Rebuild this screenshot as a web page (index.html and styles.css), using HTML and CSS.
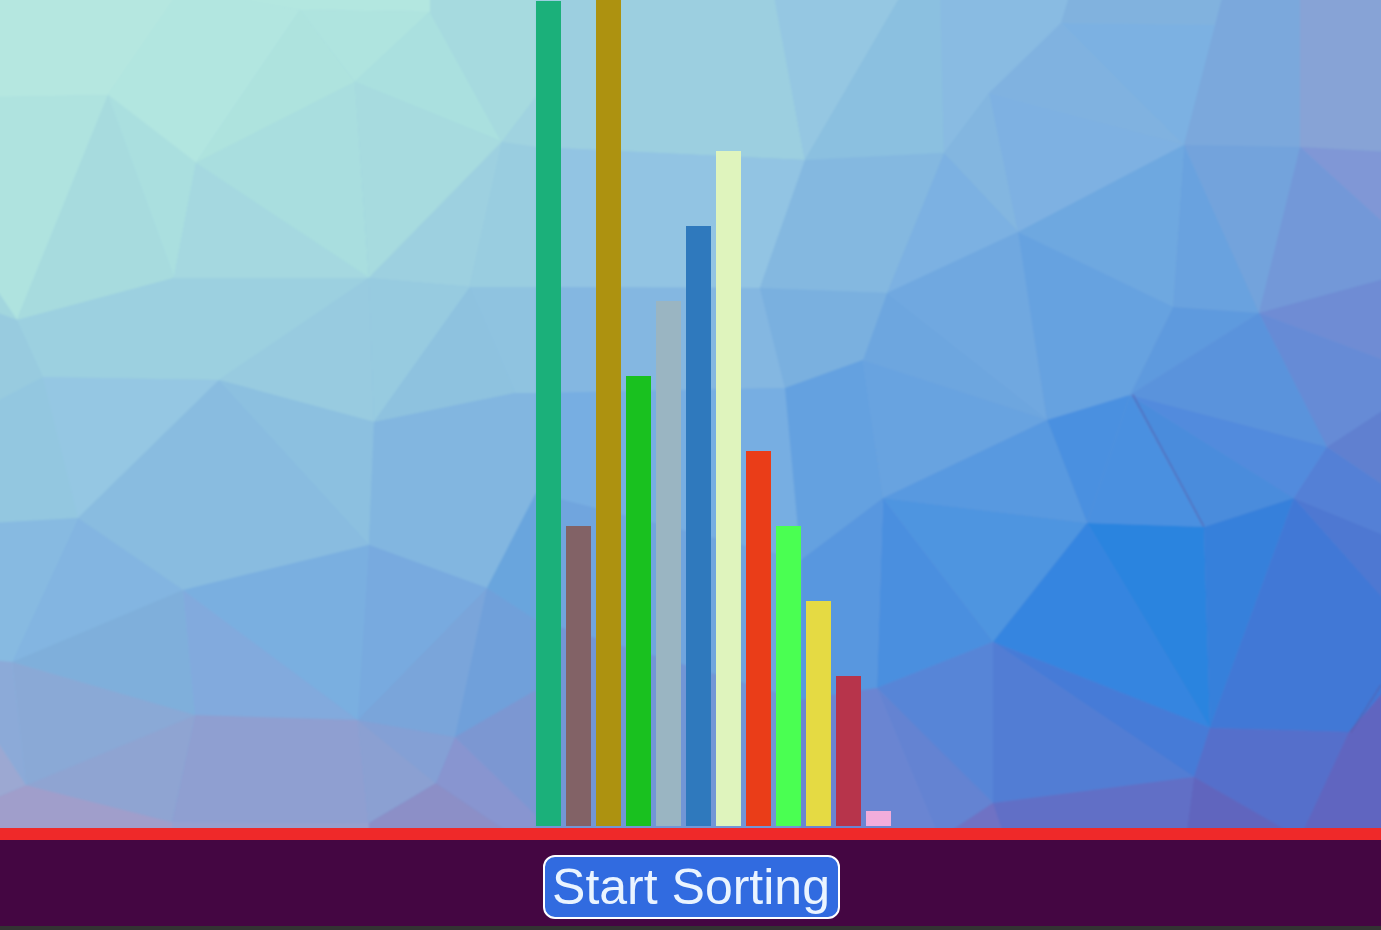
FILE: index.html
```html
<!DOCTYPE html>
<html lang="en">
<head>
    <meta charset="UTF-8">
    <title>Sorting</title>
    <link rel="stylesheet" href="styles.css">
</head>
<body>
    <div class="stage">
        <svg class="mesh" width="1401" height="848" viewBox="-10 -10 1401 848" aria-hidden="true">
            <defs>
                <linearGradient id="base" x1="0" y1="0" x2="1" y2="1">
                    <stop offset="0" stop-color="#b4e6e0"/>
                    <stop offset="0.5" stop-color="#7cb0e0"/>
                    <stop offset="1" stop-color="#5a70c8"/>
                </linearGradient>
            </defs>
            <rect x="-10" y="-10" width="1401" height="848" fill="url(#base)"/>
            <!-- left -->
            <polygon fill="#b5e7e0" points="-10,-10 180,-10 108,95 -10,97"/>
            <polygon fill="#b2e6e0" points="180,-10 300,10 196,163 108,95"/>
            <polygon fill="#b3e7e0" points="180,-10 430,-10 430,12 300,10"/>
            <polygon fill="#aee3de" points="300,10 355,82 196,163"/>
            <polygon fill="#afe4df" points="300,10 430,12 355,82"/>
            <polygon fill="#aae0df" points="430,12 502,142 355,82"/>
            <polygon fill="#a6dadf" points="430,-10 536,-10 536,97 502,142 430,12"/>
            <polygon fill="#afe3df" points="-10,97 108,95 17,320 -10,280"/>
            <polygon fill="#a7dbde" points="108,95 174,278 17,320"/>
            <polygon fill="#aadfdf" points="108,95 196,163 174,278"/>
            <polygon fill="#a5d8e0" points="196,163 369,278 174,278"/>
            <polygon fill="#a9dedf" points="196,163 355,82 369,278"/>
            <polygon fill="#a7dbdf" points="355,82 502,142 369,278"/>
            <polygon fill="#9dd0e0" points="502,142 470,287 369,278"/>
            <polygon fill="#99cde0" points="502,142 536,147 536,287 470,287"/>
            <polygon fill="#a0d3e0" points="502,142 536,97 536,147"/>
            <polygon fill="#9cd0e0" points="17,320 174,278 369,278 219,380 43,377"/>
            <polygon fill="#98cbe0" points="369,278 219,380 374,422"/>
            <polygon fill="#97cbe0" points="369,278 470,287 374,422"/>
            <polygon fill="#8ec2df" points="470,287 515,393 374,422"/>
            <polygon fill="#8fc3e0" points="470,287 536,287 536,393 515,393"/>
            <polygon fill="#a2d6de" points="-10,280 17,320 -10,310"/>
            <polygon fill="#98cbdf" points="-10,310 17,320 43,377 -10,405"/>
            <polygon fill="#93c7e0" points="-10,405 43,377 78,518 -10,523"/>
            <polygon fill="#95c7e3" points="43,377 219,380 78,518"/>
            <polygon fill="#89bce0" points="219,380 369,545 183,590 78,518"/>
            <polygon fill="#8cc0e0" points="219,380 374,422 369,545"/>
            <polygon fill="#82b6e0" points="374,422 515,393 536,393 536,493 487,588 369,545"/>
            <polygon fill="#83b5e1" points="78,518 183,590 12,662"/>
            <polygon fill="#87bae1" points="-10,523 78,518 12,662 -10,660"/>
            <polygon fill="#7fafdb" points="12,662 183,590 195,715"/>
            <polygon fill="#82aadd" points="183,590 358,720 195,715"/>
            <polygon fill="#7aafe0" points="183,590 369,545 358,720"/>
            <polygon fill="#78aadf" points="369,545 487,588 358,720"/>
            <polygon fill="#7aa5da" points="487,588 455,737 358,720"/>
            <polygon fill="#70a0da" points="487,588 536,620 536,690 455,737"/>
            <polygon fill="#69a5dd" points="487,588 536,493 536,620"/>
            <polygon fill="#8aa9d6" points="12,662 195,715 26,785"/>
            <polygon fill="#8caad8" points="-10,660 12,662 26,785 -10,730"/>
            <polygon fill="#8fa4d2" points="195,715 172,822 26,785"/>
            <polygon fill="#8f9fd1" points="195,715 358,720 369,823 172,822"/>
            <polygon fill="#8ba0d2" points="358,720 436,783 369,823"/>
            <polygon fill="#84a0d5" points="358,720 455,737 436,783"/>
            <polygon fill="#7c97d2" points="455,737 536,690 536,815"/>
            <polygon fill="#8895d0" points="455,737 436,783 517,838 536,838 536,815"/>
            <polygon fill="#8c8fc7" points="436,783 369,823 369,838 517,838"/>
            <polygon fill="#a09ecb" points="26,785 172,822 172,838 -10,838 -10,800"/>
            <polygon fill="#96a0cf" points="172,822 369,823 369,838 172,838"/>
            <polygon fill="#9ca8d2" points="-10,730 26,785 -10,800"/>
            <!-- middle, mostly behind the bars -->
            <polygon fill="#9ccfe0" points="536,-10 773,-10 805,160 536,147"/>
            <polygon fill="#92c4e3" points="536,147 805,160 760,288 536,287"/>
            <polygon fill="#84b7e1" points="536,287 760,288 785,388 536,393"/>
            <polygon fill="#77aee2" points="536,393 785,388 801,560 536,493"/>
            <polygon fill="#70a5de" points="536,493 801,560 800,700 536,620"/>
            <polygon fill="#7296d6" points="536,620 800,700 800,838 536,838"/>
            <!-- right -->
            <polygon fill="#95c7e2" points="773,-10 904,-10 805,160"/>
            <polygon fill="#8bc0e0" points="904,-10 940,-10 944,153 805,160"/>
            <polygon fill="#89bbe2" points="940,-10 1071,-10 1061,23 989,93 944,153"/>
            <polygon fill="#81b2de" points="1071,-10 1224,-10 1215,25 1061,23"/>
            <polygon fill="#7cb1e2" points="1061,23 1215,25 1184,145"/>
            <polygon fill="#80b2e0" points="1061,23 1184,145 989,93"/>
            <polygon fill="#7eb1e2" points="989,93 1184,145 1018,232"/>
            <polygon fill="#83b6e0" points="989,93 1018,232 944,153"/>
            <polygon fill="#7cb1e2" points="944,153 1018,232 887,293"/>
            <polygon fill="#84b8e0" points="805,160 944,153 887,293 760,288"/>
            <polygon fill="#7ba8dc" points="1224,-10 1300,-10 1300,147 1184,145 1215,25"/>
            <polygon fill="#87a3d6" points="1300,-10 1391,-10 1391,152 1300,147"/>
            <polygon fill="#73a3dc" points="1184,145 1300,147 1259,313"/>
            <polygon fill="#69a2df" points="1184,145 1259,313 1173,307"/>
            <polygon fill="#6ea8e0" points="1018,232 1184,145 1173,307"/>
            <polygon fill="#8097d6" points="1300,147 1391,152 1391,230"/>
            <polygon fill="#7398d8" points="1300,147 1391,230 1391,277 1259,313"/>
            <polygon fill="#6f8cd4" points="1259,313 1391,277 1391,363"/>
            <polygon fill="#668bd6" points="1259,313 1391,363 1391,405 1327,447"/>
            <polygon fill="#5e9ade" points="1173,307 1259,313 1130,395"/>
            <polygon fill="#5a93dc" points="1259,313 1327,447 1130,395"/>
            <polygon fill="#70a8e0" points="887,293 1018,232 1047,420"/>
            <polygon fill="#66a2e0" points="1018,232 1173,307 1130,395 1047,420"/>
            <polygon fill="#6da6df" points="887,293 1047,420 863,360"/>
            <polygon fill="#7ab0df" points="760,288 887,293 863,360 785,388"/>
            <polygon fill="#68a3e0" points="863,360 1047,420 883,498"/>
            <polygon fill="#64a1e0" points="785,388 863,360 883,498 801,560"/>
            <polygon fill="#4a90e0" points="1047,420 1130,395 1087,523"/>
            <polygon fill="#5899e0" points="883,498 1047,420 1087,523"/>
            <polygon fill="#4a8cdc" points="1130,395 1204,527 1294,498"/>
            <polygon fill="#528bdd" points="1130,395 1294,498 1327,447"/>
            <polygon fill="#4a90e0" points="1130,395 1087,523 1204,527"/>
            <polygon fill="#4e95e0" points="883,498 1087,523 993,642"/>
            <polygon fill="#4a8fdf" points="883,498 993,642 877,688"/>
            <polygon fill="#5897df" points="801,560 883,498 877,688 800,700"/>
            <polygon fill="#2a84df" points="1087,523 1204,527 1210,728"/>
            <polygon fill="#3585e0" points="1087,523 1210,728 993,642"/>
            <polygon fill="#3680db" points="1204,527 1294,498 1210,728"/>
            <polygon fill="#4178d6" points="1294,498 1391,607 1391,683 1349,732 1210,728"/>
            <polygon fill="#4e78d2" points="1294,498 1391,538 1391,607"/>
            <polygon fill="#5480d6" points="1294,498 1327,447 1391,490 1391,538"/>
            <polygon fill="#6080d0" points="1327,447 1391,405 1391,490"/>
            <polygon fill="#467bd7" points="993,642 1210,728 1194,777"/>
            <polygon fill="#527dd4" points="993,642 1194,777 993,803"/>
            <polygon fill="#5785d7" points="877,688 993,642 993,803"/>
            <polygon fill="#6a85d2" points="800,700 877,688 940,838 800,838"/>
            <polygon fill="#6483d2" points="877,688 993,803 940,838"/>
            <polygon fill="#616fc6" points="993,803 1194,777 1186,838 993,838"/>
            <polygon fill="#6f72c4" points="940,838 993,803 1005,838"/>
            <polygon fill="#556fcb" points="1194,777 1210,728 1349,732 1300,838"/>
            <polygon fill="#6065be" points="1194,777 1300,838 1186,838"/>
            <polygon fill="#6065c0" points="1349,732 1391,683 1391,838 1300,838"/>
            <line class="crack" x1="1133" y1="395" x2="1204" y2="527"/>
            <line class="crack" x1="1351" y1="732" x2="1381" y2="685"/>
        </svg>

        <div class="bars">
            <div class="bar bar-teal" style="height:825px"></div>
            <div class="bar bar-mauve" style="height:300px"></div>
            <div class="bar bar-olive" style="height:900px"></div>
            <div class="bar bar-green" style="height:450px"></div>
            <div class="bar bar-slate" style="height:525px"></div>
            <div class="bar bar-blue" style="height:600px"></div>
            <div class="bar bar-cream" style="height:675px"></div>
            <div class="bar bar-red" style="height:375px"></div>
            <div class="bar bar-lime" style="height:300px"></div>
            <div class="bar bar-yellow" style="height:225px"></div>
            <div class="bar bar-crimson" style="height:150px"></div>
            <div class="bar bar-pink" style="height:15px"></div>
        </div>
    </div>

    <div class="controls">
        <button class="start-btn">Start Sorting</button>
    </div>
</body>
</html>
```

FILE: styles.css
```css
*{
    margin: 0;
    padding: 0;
    box-sizing: border-box;
}
html, body{
    height: 100%;
}
body{
    background: #333333;
    overflow: hidden;
    font-family: "Liberation Sans", Arial, sans-serif;
}
.stage{
    position: relative;
    height: 828px;
    overflow: hidden;
}
.mesh{
    position: absolute;
    top: -10px;
    left: -10px;
    display: block;
    filter: blur(1.2px);
}
.crack{
    stroke: #5a5aa6;
    stroke-width: 1.4;
    stroke-dasharray: 1.5 1;
}
.bars{
    position: relative;
    height: 100%;
    display: flex;
    align-items: flex-end;
    gap: 5px;
    padding: 0 0 2px 536px;
}
.bar{
    flex: none;
    width: 25px;
}
.bar-teal{ background: #1bb07a; }
.bar-mauve{ background: #826266; }
.bar-olive{ background: #ad9210; }
.bar-green{ background: #19c11f; }
.bar-slate{ background: #9ab5c2; }
.bar-blue{ background: #2f79bd; }
.bar-cream{ background: #dff4bd; }
.bar-red{ background: #ea3d18; }
.bar-lime{ background: #4aff52; }
.bar-yellow{ background: #e5da43; }
.bar-crimson{ background: #b7344b; }
.bar-pink{ background: #f2addb; }
.controls{
    height: 98px;
    background: #440642;
    border-top: 12px solid #ef2929;
    display: flex;
    justify-content: center;
    align-items: flex-start;
    padding: 15px 0 0 1px;
}
.start-btn{
    width: 297px;
    height: 64px;
    padding: 0;
    font-family: "Liberation Sans", Arial, sans-serif;
    font-size: 50px;
    color: #eaf4ff;
    background: #316be0;
    border: 2px solid #ffffff;
    border-radius: 12px;
    cursor: pointer;
}
```
